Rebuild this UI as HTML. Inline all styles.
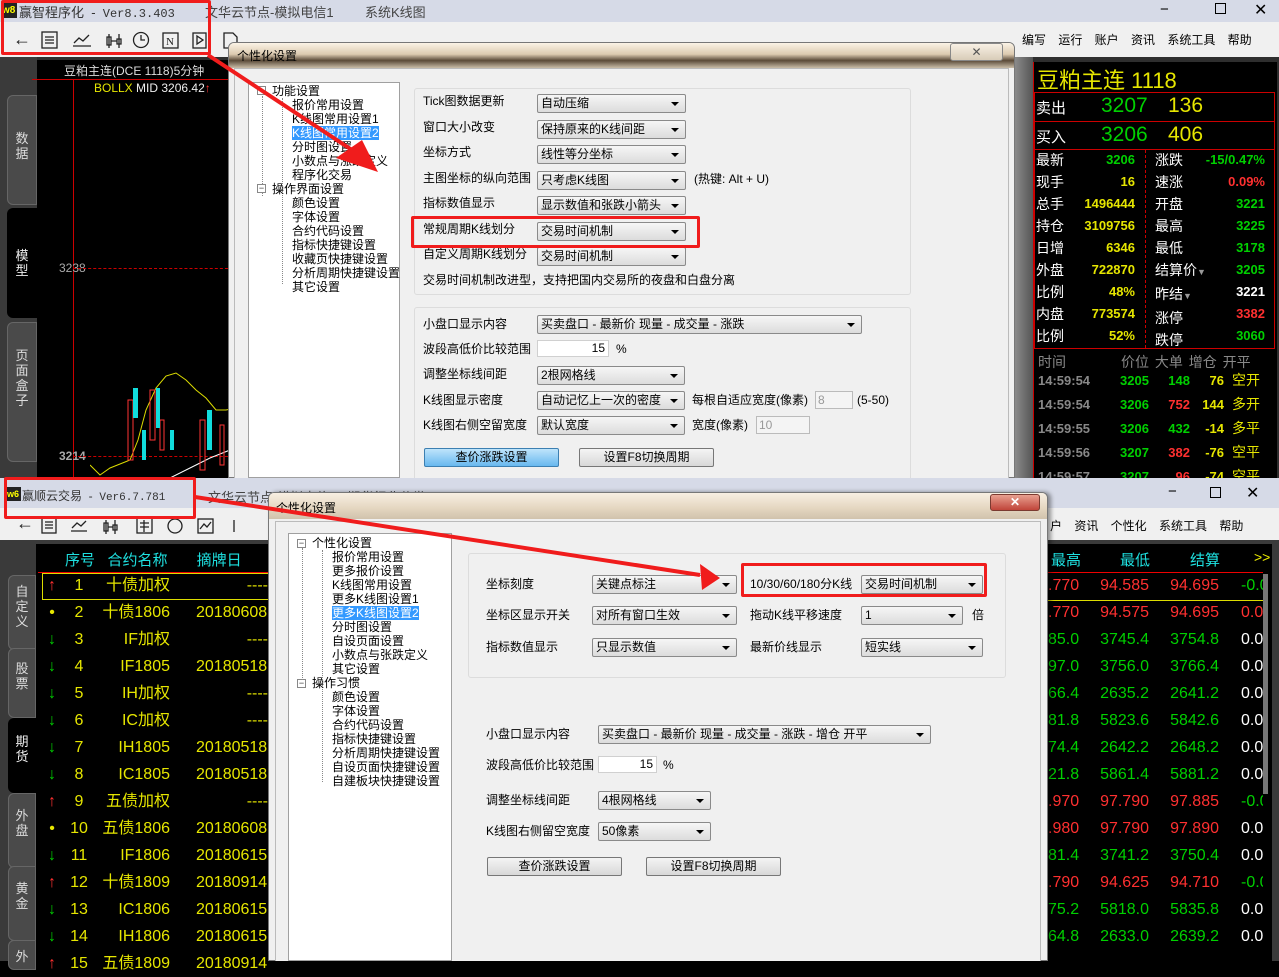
<!DOCTYPE html>
<html><head><meta charset="utf-8">
<style>
*{margin:0;padding:0;box-sizing:border-box}
body{width:1279px;height:961px;overflow:hidden;position:relative;background:#000;font-family:"Liberation Sans","Noto Sans CJK SC",sans-serif;}
.a{position:absolute;white-space:nowrap}
.t12{font-size:12px;line-height:14px;color:#000}
.cb{position:absolute;height:19px;border:1px solid #8a8a8a;border-radius:2px;background:linear-gradient(#f6f6f6,#dcdcdc);font-size:12px;line-height:17px;padding-left:3px;color:#000;white-space:nowrap;overflow:hidden}
.cb:after{content:"";position:absolute;right:6px;top:7px;border-left:4px solid transparent;border-right:4px solid transparent;border-top:4px solid #000}
.in{position:absolute;height:17px;background:#fff;border:1px solid #d0d0d0;font-size:12px;line-height:15px;text-align:right;padding-right:3px}
.in2{position:absolute;height:18px;background:#f4f4f4;border:1px solid #bbb;font-size:12px;line-height:16px;color:#999;padding-left:2px}
.btn{position:absolute;height:19px;border:1px solid #777;border-radius:2px;background:linear-gradient(#f4f4f4,#d8d8d8);font-size:12px;line-height:17px;text-align:center}
.grp{position:absolute;border:1px solid #dcdcdc;border-radius:3px;background:#f0f0f0}
.redbox{position:absolute;border:3px solid #f01c1c;border-radius:2px}
.tree{position:absolute;background:#fff;border:1px solid #a0a0a0}
.ti{position:absolute;font-size:12px;line-height:14px;white-space:nowrap;color:#000}
.sel{background:#3399ff;color:#fff}
.mb{position:absolute;width:9px;height:9px;border:1px solid #888;background:#fff;font-size:9px;line-height:6px;text-align:center;color:#333}
.tab{position:absolute;background:#4a4a4a;border:1px solid #666;color:#ddd;font-size:13px;line-height:15px;text-align:center;border-radius:6px 0 0 6px}
.rp{font-size:14px;font-weight:bold}
.ylw{color:#e6e600}.grn{color:#00d000}.red{color:#ff3030}.wht{color:#fff}
</style></head><body>

<!-- ================= TOP APP ================= -->
<div class="a" style="left:0;top:0;width:1279px;height:22px;background:#d6dae7"></div>
<div class="a" style="left:2px;top:3px;width:15px;height:15px;background:#222;color:#ff0;font-size:10px;line-height:15px;font-weight:bold">w8</div>
<div class="a" style="left:19px;top:2px;font-size:13px;color:#333">赢智程序化 &nbsp;- &nbsp;<span style="font-family:'Liberation Mono';font-size:12px">Ver8.3.403</span></div>
<div class="a" style="left:205px;top:2px;font-size:13px;color:#444">文华云节点-模拟电信1</div>
<div class="a" style="left:365px;top:2px;font-size:13px;color:#444">系统K线图</div>
<div class="a" style="left:1160px;top:1px;font-size:15px;color:#000">−</div>
<div class="a" style="left:1215px;top:3px;width:11px;height:11px;border:1px solid #000"></div>
<div class="a" style="left:1254px;top:0px;font-size:16px;color:#000">✕</div>
<div class="a" style="left:0;top:22px;width:1279px;height:35px;background:#f0f0f0"></div>
<div class="a" style="left:13px;top:29px;font-size:18px;color:#222">&larr;</div>
<svg class="a" style="left:40px;top:30px" width="240" height="22" fill="none" stroke="#222" stroke-width="1.3">
<rect x="2" y="2" width="15" height="16"/><path d="M5 7h9M5 10h9M5 13h9"/>
<path d="M33 16h18M34 13l5-5 4 3 6-6"/>
<path d="M69 4v14M67 7h4v8h-4zM79 4v14M77 9h4v5h-4zM71 11h6"/>
<circle cx="101" cy="10" r="7.5"/><path d="M101 5v5h4"/>
<rect x="123" y="3" width="15" height="15"/><text x="126" y="15" font-size="11" fill="#222" stroke="none" font-family="Liberation Serif">N</text>
<rect x="153" y="3" width="13" height="15"/><path d="M157 6l6 4-6 4z"/>
<path d="M184 3h9l4 4v11h-13z"/>
</svg>
<div class="a" style="left:1022px;top:31px;font-size:12px;color:#000;word-spacing:9px">编写 运行 账户 资讯 系统工具 帮助</div>

<!-- dark area top app -->
<div class="a" style="left:0;top:57px;width:1279px;height:421px;background:#2e2e2e"></div>
<div class="a" style="left:0;top:57px;width:37px;height:421px;background:#3a3a3a"></div>
<div class="tab" style="left:7px;top:95px;width:30px;height:110px;padding-top:35px">数<br>据</div>
<div class="a" style="left:7px;top:208px;width:30px;height:110px;background:#000;color:#eee;font-size:13px;line-height:15px;text-align:center;padding-top:40px;border-radius:6px 0 0 6px">模<br>型</div>
<div class="tab" style="left:7px;top:322px;width:30px;height:140px;padding-top:25px">页<br>面<br>盒<br>子</div>
<div class="a" style="left:37px;top:60px;width:195px;height:418px;background:#000"></div>
<div class="a" style="left:64px;top:62px;font-size:12px;color:#ddd">豆粕主连(DCE 1118)5分钟</div>
<div class="a" style="left:32px;top:79px;width:200px;height:1px;background:#c00"></div>
<div class="a" style="left:73px;top:80px;width:1px;height:398px;background:#c00"></div>
<div class="a" style="left:94px;top:81px;font-size:12px"><span class="ylw">BOLLX</span> <span style="color:#eee">MID 3206.42</span><span class="red">↑</span></div>
<div class="a" style="left:59px;top:261px;font-size:12px;color:#aaa">3238</div>
<div class="a" style="left:73px;top:268px;width:160px;border-top:1px dashed #c00"></div>
<div class="a" style="left:59px;top:449px;font-size:12px;color:#aaa;font-weight:bold">3214</div>
<div class="a" style="left:73px;top:456px;width:160px;border-top:1px dashed #c00"></div>
<svg class="a" style="left:90px;top:370px" width="145" height="108">
<polyline fill="none" stroke="#dd0" stroke-width="1" points="0,95 10,105 20,98 30,94 40,90 48,70 56,40 66,18 76,6 86,3 96,10 106,20 116,28 126,40 136,40 146,38"/>
<polyline fill="none" stroke="#fff" stroke-width="1" points="80,108 100,98 120,88 140,80"/>
<g fill="none" stroke="#f33"><rect x="38" y="30" width="5" height="60"/><rect x="60" y="20" width="5" height="50"/><rect x="70" y="50" width="4" height="30"/><rect x="110" y="50" width="5" height="50"/><rect x="130" y="55" width="4" height="40"/></g>
<g fill="#1dd"><rect x="43" y="18" width="5" height="30"/><rect x="66" y="18" width="4" height="40"/><rect x="52" y="60" width="4" height="30"/><rect x="80" y="60" width="4" height="20"/><rect x="117" y="40" width="5" height="40"/><rect x="138" y="55" width="4" height="20"/></g>
</svg>

<!-- right quote panel -->
<div class="a" style="left:1015px;top:57px;width:18px;height:421px;background:linear-gradient(90deg,#8a8a8a,#555)"></div>
<div class="a" style="left:1033px;top:62px;width:244px;height:416px;background:#000"></div>
<div class="a" style="left:1033px;top:62px;width:1px;height:416px;background:#c00"></div>
<div class="a" style="left:1037px;top:63px;font-size:22px;color:#e6e600">豆粕主连 1118</div>
<div class="a" style="left:1034px;top:92px;width:241px;height:30px;border:1px solid #c00"></div>
<div class="a" style="left:1034px;top:121px;width:241px;height:29px;border:1px solid #c00"></div>
<div class="a" style="left:1034px;top:149px;width:241px;height:200px;border:1px solid #c00"></div>
<div class="a" style="left:1145px;top:150px;height:198px;border-left:1px dashed #c00"></div>
<div class="a" style="left:1036px;top:97px;font-size:15px;color:#fff">卖出</div>
<div class="a grn" style="left:1101px;top:94px;font-size:21px">3207</div>
<div class="a ylw" style="left:1168px;top:94px;font-size:21px">136</div>
<div class="a" style="left:1036px;top:126px;font-size:15px;color:#fff">买入</div>
<div class="a grn" style="left:1101px;top:123px;font-size:21px">3206</div>
<div class="a ylw" style="left:1168px;top:123px;font-size:21px">406</div>
<div class="a" style="left:1036px;top:149px;font-size:14px;line-height:22px;color:#fff">最新<br>现手<br>总手<br>持仓<br>日增<br>外盘<br>比例<br>内盘<br>比例</div>
<div class="a rp" style="left:1040px;top:149px;width:95px;text-align:right;line-height:22px;font-size:13px"><span class="grn">3206</span><br><span class="ylw">16<br>1496444<br>3109756<br>6346<br>722870<br>48%<br>773574<br>52%</span></div>
<div class="a" style="left:1155px;top:149px;font-size:14px;line-height:22px;color:#fff">涨跌<br>速涨<br>开盘<br>最高<br>最低<br>结算价<span style="color:#999;font-size:9px">▼</span><br>昨结<span style="color:#999;font-size:9px">▼</span><br>涨停<br>跌停</div>
<div class="a rp" style="left:1170px;top:149px;width:95px;text-align:right;line-height:22px;font-size:13px"><span class="grn">-15/0.47%</span><br><span class="red">0.09%</span><br><span class="grn">3221<br>3225<br>3178<br>3205</span><br><span class="wht">3221</span><br><span class="red">3382</span><br><span class="grn">3060</span></div>
<div class="a" style="left:1038px;top:352px;font-size:14px;color:#888">时间</div>
<div class="a" style="left:1121px;top:352px;font-size:14px;color:#888;word-spacing:2px">价位 大单 增仓 开平</div>
<div class="a rp" style="left:1038px;top:369px;line-height:24px;font-size:13px;color:#888">14:59:54<br>14:59:54<br>14:59:55<br>14:59:56<br>14:59:57</div>
<div class="a rp grn" style="left:1120px;top:369px;line-height:24px;font-size:13px">3205<br>3206<br>3206<br>3207<br>3207</div>
<div class="a rp" style="left:1150px;top:369px;width:40px;text-align:right;line-height:24px;font-size:13px"><span class="grn">148</span><br><span class="red">752</span><br><span class="grn">432</span><br><span class="red">382</span><br><span class="red">96</span></div>
<div class="a rp ylw" style="left:1190px;top:369px;width:34px;text-align:right;line-height:24px;font-size:13px">76<br>144<br>-14<br>-76<br>-74</div>
<div class="a ylw" style="left:1232px;top:368px;line-height:24px;font-size:14px">空开<br>多开<br>多平<br>空平<br>空平</div>

<!-- ===== DIALOG 1 ===== -->
<div class="a" style="left:228px;top:42px;width:787px;height:436px;background:#f0f0f0;border:1px solid #777;border-radius:6px 6px 0 0"></div>
<div class="a" style="left:229px;top:43px;width:785px;height:25px;background:linear-gradient(#fbf3e6,#dccab0 45%,#5a4a38 70%,#c9bda8);border-radius:5px 5px 0 0"></div>
<div class="a" style="left:237px;top:47px;font-size:12px;color:#000">个性化设置</div>
<div class="a" style="left:950px;top:43px;width:53px;height:18px;border:1px solid #888;border-radius:3px;background:linear-gradient(#f8f0e4,#d8ccb8);text-align:center;font-size:12px;line-height:16px;color:#555">✕</div>
<div class="a" style="left:234px;top:68px;width:775px;height:410px;background:#f0f0f0;border:1px solid #bbb;border-bottom:none"></div>
<div class="tree" style="left:248px;top:82px;width:152px;height:396px"></div>
<div class="a" style="left:262px;top:96px;height:100px;border-left:1px dotted #888"></div>
<div class="a" style="left:282px;top:98px;height:186px;border-left:1px dotted #888"></div>
<div class="mb" style="left:257px;top:86px">−</div>
<div class="mb" style="left:257px;top:184px">−</div>
<div class="ti" style="left:272px;top:84px">功能设置</div>
<div class="ti" style="left:292px;top:98px;line-height:14px">报价常用设置<br>K线图常用设置1<br><span class="sel">K线图常用设置2</span><br>分时图设置<br>小数点与涨跌定义<br>程序化交易</div>
<div class="ti" style="left:272px;top:182px">操作界面设置</div>
<div class="ti" style="left:292px;top:196px">颜色设置<br>字体设置<br>合约代码设置<br>指标快捷键设置<br>收藏页快捷键设置<br>分析周期快捷键设置<br>其它设置</div>

<div class="grp" style="left:414px;top:88px;width:497px;height:207px"></div>
<div class="a t12" style="left:423px;top:89px;line-height:25.5px">Tick图数据更新<br>窗口大小改变<br>坐标方式<br>主图坐标的纵向范围<br>指标数值显示<br>常规周期K线划分<br>自定义周期K线划分<br>交易时间机制改进型，支持把国内交易所的夜盘和白盘分离</div>
<div class="cb" style="left:537px;top:94px;width:149px">自动压缩</div>
<div class="cb" style="left:537px;top:120px;width:149px">保持原来的K线间距</div>
<div class="cb" style="left:537px;top:145px;width:149px">线性等分坐标</div>
<div class="cb" style="left:537px;top:171px;width:149px">只考虑K线图</div>
<div class="a t12" style="left:694px;top:172px">(热键: Alt + U)</div>
<div class="cb" style="left:537px;top:196px;width:149px">显示数值和张跌小箭头</div>
<div class="cb" style="left:537px;top:222px;width:149px">交易时间机制</div>
<div class="cb" style="left:537px;top:247px;width:149px">交易时间机制</div>
<div class="redbox" style="left:411px;top:216px;width:289px;height:32px"></div>

<div class="grp" style="left:414px;top:307px;width:497px;height:175px"></div>
<div class="a t12" style="left:423px;top:312px;line-height:25.2px">小盘口显示内容<br>波段高低价比较范围<br>调整坐标线间距<br>K线图显示密度<br>K线图右侧空留宽度</div>
<div class="cb" style="left:537px;top:315px;width:325px">买卖盘口 - 最新价 现量 - 成交量 - 涨跌</div>
<div class="in" style="left:537px;top:340px;width:72px">15</div>
<div class="a t12" style="left:616px;top:342px">%</div>
<div class="cb" style="left:537px;top:366px;width:148px">2根网格线</div>
<div class="cb" style="left:537px;top:391px;width:148px">自动记忆上一次的密度</div>
<div class="a t12" style="left:692px;top:393px">每根自适应宽度(像素)</div>
<div class="in2" style="left:815px;top:391px;width:38px">8</div>
<div class="a t12" style="left:857px;top:393px">(5-50)</div>
<div class="cb" style="left:537px;top:416px;width:148px">默认宽度</div>
<div class="a t12" style="left:692px;top:418px">宽度(像素)</div>
<div class="in2" style="left:756px;top:416px;width:54px">10</div>
<div class="btn" style="left:424px;top:448px;width:135px;background:linear-gradient(#bfe4fb,#68b8ef);border-color:#3c7fb1">查价涨跌设置</div>
<div class="btn" style="left:579px;top:448px;width:135px">设置F8切换周期</div>

<!-- ================= BOTTOM APP ================= -->
<div class="a" style="left:0;top:478px;width:1279px;height:30px;background:#d6dae7"></div>
<div class="a" style="left:7px;top:487px;width:14px;height:14px;background:#222;color:#ff0;font-size:9px;line-height:14px;font-weight:bold">w6</div>
<div class="a" style="left:22px;top:487px;font-size:12px;color:#333">赢顺云交易 &nbsp;- &nbsp;<span style="font-family:'Liberation Mono';font-size:11px">Ver6.7.781</span></div>
<div class="a" style="left:208px;top:487px;font-size:13px;color:#444">文华云节点-模拟电信2 &nbsp; 期货行业分类</div>
<div class="a" style="left:1168px;top:483px;font-size:15px;color:#000">−</div>
<div class="a" style="left:1210px;top:487px;width:11px;height:11px;border:1px solid #000"></div>
<div class="a" style="left:1246px;top:483px;font-size:16px;color:#000">✕</div>
<div class="a" style="left:0;top:508px;width:1279px;height:32px;background:#f0f0f0"></div>
<div class="a" style="left:16px;top:513px;font-size:18px;color:#222">&larr;</div>
<svg class="a" style="left:40px;top:516px" width="210" height="22" fill="none" stroke="#222" stroke-width="1.3">
<rect x="2" y="2" width="14" height="15"/><path d="M5 6h8M5 9h8M5 12h8"/>
<path d="M31 15h16M32 12l5-5 4 3 5-5"/>
<path d="M66 4v14M64 7h4v8h-4zM75 4v14M73 9h4v5h-4zM68 11h5"/>
<rect x="97" y="2" width="15" height="15"/><path d="M100 7h9M100 11h9M104 4v12"/>
<circle cx="135" cy="10" r="7"/>
<rect x="158" y="3" width="15" height="14"/><path d="M160 13l4-5 3 3 4-5"/>
<path d="M194 4v12"/>
</svg>
<div class="a" style="left:1050px;top:517px;font-size:12px;color:#000;word-spacing:9px">户 资讯 个性化 系统工具 帮助</div>

<div class="a" style="left:0;top:540px;width:1279px;height:421px;background:#3a3a3a"></div>
<div class="tab" style="left:8px;top:575px;width:28px;height:75px;padding-top:8px">自<br>定<br>义</div>
<div class="tab" style="left:8px;top:648px;width:28px;height:70px;padding-top:12px">股<br>票</div>
<div class="a" style="left:8px;top:718px;width:28px;height:75px;background:#000;color:#eee;font-size:13px;line-height:15px;text-align:center;padding-top:16px;border-radius:6px 0 0 6px">期<br>货</div>
<div class="tab" style="left:8px;top:793px;width:28px;height:75px;padding-top:14px">外<br>盘</div>
<div class="tab" style="left:8px;top:866px;width:28px;height:75px;padding-top:14px">黄<br>金</div>
<div class="tab" style="left:8px;top:940px;width:28px;height:30px;padding-top:8px">外</div>
<div class="a" style="left:36px;top:544px;width:232px;height:417px;background:#000"></div>
<div class="a" style="left:65px;top:549px;font-size:15px;color:#1ee0e0">序号 &nbsp; 合约名称 &nbsp; &nbsp; &nbsp; 摘牌日</div>
<div class="a" style="left:38px;top:572px;width:232px;height:1px;background:#e00"></div>
<div class="a" style="left:42px;top:573px;width:230px;height:27px;border:1px solid #dd0"></div>
<div class="a" style="left:45px;top:572px;font-size:16px;line-height:27px;text-align:center;width:14px"><span class="red">↑</span><br><span class="ylw">•</span><br><span class="grn">↓<br>↓<br>↓<br>↓<br>↓<br>↓</span><br><span class="red">↑</span><br><span class="ylw">•</span><br><span class="grn">↓</span><br><span class="red">↑</span><br><span class="grn">↓<br>↓</span><br><span class="red">↑</span></div>
<div class="a ylw" style="left:62px;top:572px;width:34px;text-align:center;font-size:16px;line-height:27px">1<br>2<br>3<br>4<br>5<br>6<br>7<br>8<br>9<br>10<br>11<br>12<br>13<br>14<br>15</div>
<div class="a ylw" style="left:100px;top:572px;width:70px;text-align:right;font-size:16px;line-height:27px">十债加权<br>十债1806<br>IF加权<br>IF1805<br>IH加权<br>IC加权<br>IH1805<br>IC1805<br>五债加权<br>五债1806<br>IF1806<br>十债1809<br>IC1806<br>IH1806<br>五债1809</div>
<div class="a ylw" style="left:196px;top:572px;font-size:16px;line-height:27px"><br>20180608<br><br>20180518<br><br><br>20180518<br>20180518<br><br>20180608<br>20180615<br>20180914<br>20180615<br>20180615<br>20180914</div>
<div class="a" style="left:240px;top:572px;font-size:16px;line-height:27px;color:#dd0;text-align:right;width:28px">----<br><br>----<br><br>----<br>----<br><br><br>----</div>

<!-- right table bottom -->
<div class="a" style="left:1048px;top:544px;width:224px;height:417px;background:#000"></div>
<div class="a" style="left:1051px;top:549px;font-size:15px;color:#1ee0e0">最高</div>
<div class="a" style="left:1120px;top:549px;font-size:15px;color:#1ee0e0">最低</div>
<div class="a" style="left:1190px;top:549px;font-size:15px;color:#1ee0e0">结算</div>
<div class="a" style="left:1254px;top:549px;font-size:14px;color:#ee0">&gt;&gt;</div>
<div class="a" style="left:1048px;top:572px;width:215px;height:1px;background:#e00"></div>
<div class="a" style="left:1048px;top:600px;width:215px;height:1px;background:#dd0"></div>
<div class="a" style="left:1263px;top:574px;width:5px;height:220px;background:#777"></div>
<div class="a" style="left:1048px;top:572px;width:31px;overflow:hidden;text-align:right;font-size:16px;line-height:27px"><span class="red">.770<br>.770</span><br><span class="grn">85.0<br>97.0<br>66.4<br>81.8<br>74.4<br>21.8</span><br><span class="red">.970<br>.980</span><br><span class="grn">81.4</span><br><span class="red">.790</span><br><span class="grn">75.2<br>64.8</span></div>
<div class="a" style="left:1096px;top:572px;width:53px;text-align:right;font-size:16px;line-height:27px"><span class="red">94.585<br>94.575</span><br><span class="grn">3745.4<br>3756.0<br>2635.2<br>5823.6<br>2642.2<br>5861.4</span><br><span class="red">97.790<br>97.790</span><br><span class="grn">3741.2</span><br><span class="red">94.625</span><br><span class="grn">5818.0<br>2633.0</span></div>
<div class="a" style="left:1166px;top:572px;width:53px;text-align:right;font-size:16px;line-height:27px"><span class="red">94.695<br>94.695</span><br><span class="grn">3754.8<br>3766.4<br>2641.2<br>5842.6<br>2648.2<br>5881.2</span><br><span class="red">97.885<br>97.890</span><br><span class="grn">3750.4</span><br><span class="red">94.710</span><br><span class="grn">5835.8<br>2639.2</span></div>
<div class="a" style="left:1241px;top:572px;width:22px;overflow:hidden;font-size:16px;line-height:27px"><span class="grn">-0.0</span><br><span class="red">0.0</span><br><span class="wht">0.0<br>0.0<br>0.0<br>0.0<br>0.0<br>0.0</span><br><span class="grn">-0.0</span><br><span class="wht">0.0<br>0.0</span><br><span class="grn">-0.0</span><br><span class="wht">0.0<br>0.0</span></div>

<!-- ===== DIALOG 2 ===== -->
<div class="a" style="left:268px;top:492px;width:780px;height:469px;background:#f0f0f0;border:1px solid #777;border-radius:6px 6px 0 0;box-shadow:3px 0 4px rgba(0,0,0,.4)"></div>
<div class="a" style="left:269px;top:493px;width:778px;height:26px;background:linear-gradient(#f8efe2,#e4d6c0 60%,#d0c2ac);border-radius:5px 5px 0 0"></div>
<div class="a" style="left:276px;top:499px;font-size:12px;color:#000">个性化设置</div>
<div class="a" style="left:990px;top:494px;width:50px;height:17px;border:1px solid #7a3a30;border-radius:3px;background:linear-gradient(#e8a090,#c0453a);text-align:center;font-size:12px;line-height:15px;color:#fff;font-weight:bold">✕</div>
<div class="a" style="left:275px;top:521px;width:766px;height:440px;background:#f0f0f0;border:1px solid #bbb;border-bottom:none"></div>
<div class="tree" style="left:288px;top:533px;width:164px;height:428px"></div>
<div class="a" style="left:302px;top:548px;height:136px;border-left:1px dotted #888"></div>
<div class="a" style="left:322px;top:550px;height:232px;border-left:1px dotted #888"></div>
<div class="mb" style="left:297px;top:539px">−</div>
<div class="mb" style="left:297px;top:679px">−</div>
<div class="ti" style="left:312px;top:536px">个性化设置</div>
<div class="ti" style="left:332px;top:550px">报价常用设置<br>更多报价设置<br>K线图常用设置<br>更多K线图设置1<br><span class="sel">更多K线图设置2</span><br>分时图设置<br>自设页面设置<br>小数点与张跌定义<br>其它设置</div>
<div class="ti" style="left:312px;top:676px">操作习惯</div>
<div class="ti" style="left:332px;top:690px">颜色设置<br>字体设置<br>合约代码设置<br>指标快捷键设置<br>分析周期快捷键设置<br>自设页面快捷键设置<br>自建板块快捷键设置</div>

<div class="grp" style="left:468px;top:553px;width:538px;height:125px"></div>
<div class="a t12" style="left:486px;top:577px">坐标刻度</div>
<div class="a t12" style="left:486px;top:608px">坐标区显示开关</div>
<div class="a t12" style="left:486px;top:640px">指标数值显示</div>
<div class="cb" style="left:592px;top:575px;width:145px">关键点标注</div>
<div class="cb" style="left:592px;top:606px;width:145px">对所有窗口生效</div>
<div class="cb" style="left:592px;top:638px;width:145px">只显示数值</div>
<div class="a t12" style="left:750px;top:577px">10/30/60/180分K线</div>
<div class="a t12" style="left:750px;top:608px">拖动K线平移速度</div>
<div class="a t12" style="left:750px;top:640px">最新价线显示</div>
<div class="cb" style="left:861px;top:575px;width:122px">交易时间机制</div>
<div class="cb" style="left:861px;top:606px;width:102px">1</div>
<div class="a t12" style="left:972px;top:608px">倍</div>
<div class="cb" style="left:861px;top:638px;width:122px">短实线</div>
<div class="redbox" style="left:741px;top:563px;width:246px;height:34px"></div>

<div class="a t12" style="left:486px;top:727px">小盘口显示内容</div>
<div class="cb" style="left:598px;top:725px;width:333px">买卖盘口 - 最新价 现量 - 成交量 - 涨跌 - 增仓 开平</div>
<div class="a t12" style="left:486px;top:758px">波段高低价比较范围</div>
<div class="in" style="left:598px;top:756px;width:59px">15</div>
<div class="a t12" style="left:663px;top:758px">%</div>
<div class="a t12" style="left:486px;top:793px">调整坐标线间距</div>
<div class="cb" style="left:598px;top:791px;width:113px">4根网格线</div>
<div class="a t12" style="left:486px;top:824px">K线图右侧留空宽度</div>
<div class="cb" style="left:598px;top:822px;width:113px">50像素</div>
<div class="btn" style="left:487px;top:857px;width:135px">查价涨跌设置</div>
<div class="btn" style="left:646px;top:857px;width:135px">设置F8切换周期</div>

<!-- red highlight boxes & arrows -->
<div class="redbox" style="left:1px;top:0px;width:210px;height:55px"></div>
<div class="redbox" style="left:4px;top:477px;width:192px;height:42px"></div>
<svg class="a" style="left:0;top:0" width="1279" height="961">
<line x1="208" y1="55" x2="355" y2="152" stroke="#f01c1c" stroke-width="4"/>
<polygon points="336,158 362,140 378,172" fill="#f01c1c"/>
<line x1="195" y1="497" x2="700" y2="575" stroke="#f01c1c" stroke-width="4"/>
<polygon points="700,564 720,578 702,590" fill="#f01c1c"/>
</svg>
</body></html>
